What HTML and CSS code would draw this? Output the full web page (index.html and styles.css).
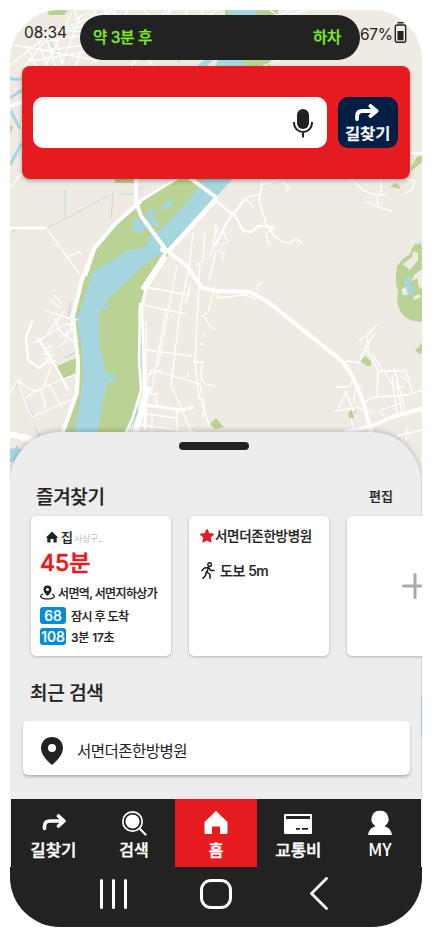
FILE: index.html
```html
<!DOCTYPE html>
<html lang="ko">
<head>
<meta charset="utf-8">
<title>즐겨찾기</title>
<link rel="stylesheet" href="styles.css">
</head>
<body>
<div class="phone">
  <svg class="map" viewBox="10 10 412 917" aria-hidden="true">
    <rect x="10" y="10" width="412" height="917" fill="#efebe3"/>
    <g fill="#bad293">
      <path d="M46 10h22l-4 5H49zM225 10H278L270 66H252L215 66H225z"/>
      <path d="M115 176h20v7h-20zM10 125l3 2-3 7z"/>
      <path d="M182 176L160 190 134 207 112 226 94 246 83 275 76 300 72 318 76 345 80 368 79 392 72 412 64 436H124L134 409 141 385 140 340 138 310 146 286 160 264 195 224 215 196 210 176z"/>
      <path d="M57 366l19-8 1 15-15 7zM411 167l6-10 5-1v6l-11 9zM390 187l5-4 4 2 1 4z"/>
      <path d="M422 247l-2-5-2 3-2-2-4 5-2 6-7 5-6 7-1 8v10l2 8-1 10 3 9 5 6 8 4 9 1zM415 350l4-3 3-5v11l-3 1zM360 361l5-5 6 5v5h-4zM348 414l3-4 5 1-2 7-4 1zM210 424l6-6 4 5 4 4-9 2z"/>
    </g>
    <g fill="#a6d7e0">
      <path d="M230 10H257L246 42 244 66H216L223 38zM197 66l9-7h8l-8 8z"/>
      <path d="M207 176L188 201 162 228 131 249 92 272 84 300 77 318 82 350 83 378 79 410 73 437H96L103 403 107 383 105 368 99 343 99 315 109 298 133 276 161 254 196 218 218 195 235 176z"/>
      <path d="M132 221l6-3 5 6 6-15 6 3-2 6 9-8-1-5 10-5 3 2-4 5-11 4-7 10 5-1 2 6-10-1-8 8-8-1z"/>
      <circle cx="111" cy="378" r="4.500"/><path d="M104 375h7v6h-7zM130 420l8-21v15l-7 13zM104 308l3-4 3 3-3 4zM10 449l5-1 2-3 2 4h5l-8 13h-6z"/>
      <path d="M405 276h5v7l5 7-2 4-5 1-1-8-3-4zM420 696h3v42h-3z"/>
    </g>
    <path fill="#bad293" d="M91 270l3-9 15-19 6 0 19-5-6 11-18 12zM128 250l20-11 1 3-8 7z"/>
    <path fill="#bad293" d="M116 301l15-21 5-8 22-17-14 28-6 27-32 4 2-6z"/>
    <g fill="#efebe3"><path d="M403 264l9-7 1-6 5 2v7l-8 10zM422 269l-8 6-3 7 6-4 2 9 3 2zM401 290l5-4 2 9-5 0zM413 297l6-3 2 3-7 3z"/></g>
    <g fill="none" stroke="#a6d7e0" stroke-width="1">
      <path stroke-width="3" d="M10 78q4 2 12 1M10 98l12-8M11 111l9 18M10 165l12-22"/>
      <path stroke-width=".700" d="M10 233l9-5h28l41-21 21-12M65 217v-27M113 192l-2 27M119 194h14l12-9"/>
      <path d="M16 383l17 33M35 428l6 10M65 358l10-5M127 349v6M141 315v65M71 302l-3 15M70 409l-6 23M47 37l8 13 12 8M140 18l4 12 12 8M178 63l5-9"/>
    </g>
    <g fill="none" stroke="#fff" stroke-width="1.300">
      <path d="M15 45l80 15M10 65l45-35 80 5M24 67l28-35 60-22M45 67l27-54M61 66l20-52M76 66l18-56M28 48l8 18M38 40l9 27M46 36l9 30M54 33l8 32M30 61l55-9M40 51l60-8M48 41l55-9M57 30l53-8M74 10l8 18M94 10l9 16M104 10l11 17M116 10l-9 16M128 10l-8 17M143 10l12 9 15-9M171 10l-18 28M188 10l-12 24M201 10l4 8 12-8M74 20l14-7 8 7 16-8 14 7M92 63l14-7M131 66l8-9M153 66l-5-8M263 66l17-6M270 10l8 6 12-6M285 16l22-6M10 188l14-18"/>
      <path d="M47 229l33 46M67 257l12-5 3 3M50 300l10 8M54 295l8 9M44 310l22 7 12 3M65 310l-18 24M72 318l-1 14-11 5M55 318l5 13 15 12M68 330l-3 12-5 4M34 343l32-19 5 1M10 393l7-12 17 10 9-3 8-21M18 385l14 32 43-19M26 397l18-10 34-14M41 390l5 19M49 384l13 23M43 350l8-4M43 355l9-5M45 360l9-6M48 365l8-5M20 384l-1-6"/>
      <path d="M145 287l45 8M144 305l42 9M147 350l45 6M148 375l13-5M142 388l10-18 48 14 2 10M155 394l3 14M145 394h14M146 414l31 4M152 415v17M177 408v24M141 425l60 8M177 265l-19 101M193 233l-4 35-9 42-9 75 21 48M200 264l-5 97 3 31 12 35M215 286l-7 26-6 5M205 317l5 10 6 2M203 332l3 5M200 344l5 0M193 362h10l-3 14 5 8 10 2M190 285l-4 18M205 230l-2 30-7 6M216 224l-3 25-4 9M187 377l2-4M199 398l5 1-1 19M166 309l-15 85M146 322v100"/>
      <path d="M216 252l-7 27M219 227l-5 11M223 232l5 10-8 3M217 250l7 3-2 7M245 198l9 10M246 198l14-4 3-18M282 182l7 5-4 6M263 185l25-9M269 246l-3-13 9-5M350 178l14 13 13 4h9M381 180v15M366 202l15 6 11 3M377 196l1 11M405 193l7-3 3-9-10-2M257 290l1-5 4-3M217 298l28-3 10 4M218 298v-6M244 291l1 6"/>
      <path stroke-width="1.600" d="M262 182l-3 18 7 24 8 12 8 6 8 1 6-4 6 4"/>
      <path d="M344 362l4-1 11 2 8-18 8-12M359 341l10-7 8-10M369 350l-3-18M372 353l8 13 8 12 5 8M366 350l6 8 6 13M378 371h28l5 17 1 5M378 372l-1 23M392 376l5 40M396 382l7 35M384 371h14M394 368l11 42M365 402l8-5 34-2 15-5M336 387h13l5-9M354 403l1-12 7-5M338 409l8-17 10 27M335 411l20-3M356 407l18 6M351 418l3 15M381 410l20-7M381 412l6 9M397 436l25-6M407 428l-1 12M397 387h7M401 376l7 6"/>
    </g>
    <g fill="none" stroke="#fff" stroke-width="2.400" stroke-linejoin="round">
      <path d="M10 228h37M178 178l-38 23M140 201l-28 26-18 21-9 27M96 246l-10 30M140 303l-1 58 2 30-9 29-8 16M142 310l3 90-7 29M216 197l-49 54-21 35-4 23M246 198l-19 24-12 24M216 201l20 16 7 14 9 1 6-6 17 1M33 320l-7 17 2 23 11 8 12-9-13-21M38 338l22 36 8 16M410 153h12"/>
    </g>
    <g fill="none" stroke="#fff" stroke-width="4" stroke-linejoin="round">
      <path d="M10 106l12-4M136 178v24l5 14 25 34M190 178l27 20M141 201l-26 23-21 25-12 31-9 36 5 45-1 32-16 43M217 199l-50 54M166 250l21 16 15 22 14 3 34 1 18 10 75 60M342 361l10 14 11 26 9 34M345 432l27-6 20-9 32-9"/>
      <path stroke-width="6" d="M10 434l31 8M148 387l-13 48M165 256l-22 34M167 252l-6-4"/>
      <path stroke-width="3" d="M145 380v50M146 405l36 5 12-3"/>
    </g>
  </svg>

  <header class="status">
    <span class="clock">08:34</span>
    <div class="island"><span>약 3분 후</span><span>하차</span></div>
    <span class="percent">67%</span>
    <svg class="battery" viewBox="0 0 12 22"><path d="M3 .7h6" stroke="#222" stroke-width="1.400"/><rect x=".8" y="3" width="10.400" height="17.300" rx="1.800" fill="none" stroke="#222" stroke-width="1.400"/><path d="M3 9h6v9.300H3z" fill="#222"/></svg>
  </header>

  <section class="search">
    <div class="field">
      <svg width="22" height="30" viewBox="0 0 22 30"><rect x="5" y="1" width="12" height="20" rx="6" fill="#222"/><path d="M2 14v1a9 9 0 0 0 18 0v-1M11 24v5.500" fill="none" stroke="#222" stroke-width="2"/></svg>
    </div>
    <div class="route">
      <svg width="24" height="18" viewBox="0 0 24 18"><path d="M2 15v-2.500q0-5.500 5.500-5.500h14M15.500 2l6 5-6 5" fill="none" stroke="#fff" stroke-width="3.800" stroke-linecap="round" stroke-linejoin="round"/></svg>
      <span>길찾기</span>
    </div>
  </section>

  <main class="sheet">
    <div class="handle"></div>
    <div class="heading"><h2>즐겨찾기</h2><span class="edit">편집</span></div>
    <div class="cards">
      <article class="card home">
        <div class="place">
          <svg width="12" height="12" viewBox="0 0 12 12"><path d="M6 .5L11.500 6v1H10.700v4.500H7.500V8h-3v3.500H1.300V7H.5V6z" fill="#222"/></svg>
          <b>집</b><small>사상구...</small>
        </div>
        <strong class="eta">45분</strong>
        <div class="stop">
          <svg width="15" height="15" viewBox="0 0 15 15"><path d="M3 9Q-2 12 3 13.300q4.500 1.300 9 0Q17 12 12 9" fill="none" stroke="#222" stroke-width="1.200"/><path fill="#222" fill-rule="evenodd" d="M7.500.5a4 4 0 0 1 4 4c0 3-4 6.500-4 6.500s-4-3.500-4-6.500a4 4 0 0 1 4-4zM7.500 3a1.500 1.500 0 1 0 0 3 1.500 1.500 0 0 0 0-3z"/></svg>
          <span>서면역, 서면지하상가</span>
        </div>
        <div class="bus"><i>68</i><span>잠시 후 도착</span></div>
        <div class="bus"><i>108</i><span>3분 17초</span></div>
      </article>
      <article class="card hospital">
        <div class="name">
          <svg width="14" height="14" viewBox="0 0 14 14"><path d="M7 1l1.700 4 4.300.4-3.200 2.900.9 4.300L7 10.400l-3.700 2.200.9-4.300L1 5.400 5.300 5z" fill="#e61b1f" stroke="#e61b1f" stroke-width="1.800" stroke-linejoin="round"/></svg>
          <span>서면더존한방병원</span>
        </div>
        <div class="walk">
          <svg width="14" height="17" viewBox="0 0 14 17"><circle cx="8.600" cy="2.500" r="1.800" fill="none" stroke="#222" stroke-width="1.500"/><path d="M1 8.500L3.500 6l4-.5 2.500 3h3M7.500 5.500L6 10l3 2.500v3.700M5.500 9.500l-1 4-2.500 2.800" fill="none" stroke="#222" stroke-width="1.600" stroke-linejoin="round" stroke-linecap="round"/></svg>
          <span>도보 5m</span>
        </div>
      </article>
      <article class="card add">
        <svg width="26" height="26" viewBox="0 0 26 26"><path d="M13 1.500v23M1.500 13h23" stroke="#aaa" stroke-width="3" stroke-linecap="round"/></svg>
      </article>
    </div>
    <h2 class="recent-title">최근 검색</h2>
    <div class="recent">
      <svg width="22" height="28" viewBox="0 0 22 28"><path fill="#222" fill-rule="evenodd" d="M11 0c6 0 11 4.600 11 11 0 8-8 14-11 17C8 25 0 19 0 11 0 4.600 5 0 11 0zm0 7a4 4 0 1 0 0 8 4 4 0 0 0 0-8z"/></svg>
      <span>서면더존한방병원</span>
    </div>
  </main>

  <nav class="tabs">
    <div class="tab"><svg width="24" height="26" viewBox="0 0 24 26"><path d="M2.500 18.500v-2q0-5.500 5.500-5.500h14M16.500 6l5.500 5-5.500 5" fill="none" stroke="#fff" stroke-width="3.600" stroke-linecap="round" stroke-linejoin="round"/></svg><span class="wide">길찾기</span></div>
    <div class="tab"><svg width="26" height="26" viewBox="0 0 26 26"><circle cx="11.500" cy="11.500" r="9.700" fill="none" stroke="#fff" stroke-width="1.700"/><circle cx="11.500" cy="11.500" r="7" fill="#fff"/><path d="M18.500 18.500l6 6" stroke="#fff" stroke-width="2.200" stroke-linecap="round"/></svg><span>검색</span></div>
    <div class="tab active"><svg width="26" height="26" viewBox="0 0 26 26"><path d="M13 1l11.500 11v11q0 1-1 1H17v-7.500H9V24H2.500q-1 0-1-1V12z" fill="#fff"/></svg><span>홈</span></div>
    <div class="tab"><svg width="28" height="26" viewBox="0 0 28 26"><path fill="#fff" fill-rule="evenodd" d="M1 4h26q1 0 1 1v18q0 1-1 1H1q-1 0-1-1V5q0-1 1-1zm1 2v3h24V6zm10 12v1.700h4V18zm6 0v1.700h6V18z"/></svg><span class="wide">교통비</span></div>
    <div class="tab"><svg width="26" height="26" viewBox="0 0 26 26"><path fill="#fff" d="M13 .8a8.300 8.300 0 0 1 4.500 15.400Q24 18 25 25H1q1-7 7.500-8.800A8.300 8.300 0 0 1 13 .8z"/></svg><span class="my">MY</span></div>
  </nav>

  <footer class="system">
    <svg width="28" height="30" viewBox="0 0 28 30"><path d="M1.500 1.500v27M13.500 1.500v27M25.500 1.500v27" stroke="#fff" stroke-width="3" stroke-linecap="round"/></svg>
    <span class="circle"></span>
    <svg width="18" height="33" viewBox="0 0 18 33"><path d="M16.500 1.500l-15 15 15 15" fill="none" stroke="#fff" stroke-width="2.800" stroke-linecap="round" stroke-linejoin="round"/></svg>
  </footer>
</div>
</body>
</html>
```
FILE: styles.css
```css
* { box-sizing: border-box; }
body { margin: 0; padding: 10px; width: 432px; height: 937px; overflow: hidden; background: #fff; font-family: Inter, "Noto Sans CJK KR", sans-serif; color: #222; }
svg { display: block; flex: none; }
span, b, small, strong, i { white-space: nowrap; }
.phone { position: relative; width: 412px; height: 917px; border-radius: 50px; overflow: hidden; display: flex; flex-direction: column; isolation: isolate; }
.map { position: absolute; inset: 0; width: 412px; height: 917px; z-index: -1; }

.status { display: flex; height: 56px; padding: 5px 0 0 14px; }
.clock { width: 56px; font-size: 15.5px; line-height: 20px; margin-top: 8px; letter-spacing: -.1px; }
.island { width: 280px; height: 45px; border-radius: 23px; background: #222; color: #80ed24; display: flex; justify-content: space-between; padding: 0 19px 0 13px; font-size: 15.5px; line-height: 45px; font-weight: 500; letter-spacing: -.3px; -webkit-text-stroke: .25px; }
.percent { font-size: 15.5px; line-height: 20px; margin-top: 10px; width: 34px; letter-spacing: -.3px; }
.battery { width: 13px; height: 22px; margin-top: 7px; }

.search { height: 113px; margin: 0 12px; border-radius: 8px; background: #e61b1f; padding: 31px 12px 0 11px; display: flex; justify-content: space-between; align-items: flex-start; box-shadow: 0 2px 4px rgba(0,0,0,.3); flex: none; }
.field { width: 294px; height: 51px; border-radius: 10px; background: #fff; display: flex; justify-content: flex-end; padding: 11px 13px 0 0; }
.route { width: 60px; height: 51px; border-radius: 10px; background: #001f45; color: #fff; display: flex; flex-direction: column; align-items: center; padding-top: 7px; font-size: 15px; font-weight: 500; line-height: 24px; -webkit-text-stroke: .35px; }
.route svg { margin-left: -2px; }
.route span { transform: scaleX(1.1); }

.sheet { margin: 253px 1px 0 0; padding-left: 1px; height: 367px; background: #ededed; border-radius: 50px 50px 0 0; box-shadow: 0 -2px 5px rgba(0,0,0,.18); flex: none; display: flex; flex-direction: column; }
.handle { width: 70px; height: 8px; border-radius: 4px; background: #222; margin: 10px auto 0; transform: translateX(-2px); flex: none; }
.heading { height: 66px; display: flex; justify-content: space-between; padding: 33px 28px 0 25px; line-height: 30px; }
h2 { margin: 0; font-size: 19px; font-weight: 500; letter-spacing: -.3px; -webkit-text-stroke: .2px; }
.edit { font-size: 13px; font-weight: 500; line-height: 27px; -webkit-text-stroke: .2px; }
.cards { display: grid; grid-template-columns: 140px 140px 140px; gap: 18px; margin: 0 -1px 0 20px; height: 140px; flex: none; overflow: visible; }
.card { background: #fff; border-radius: 5px; box-shadow: 0 1px 3px rgba(0,0,0,.25); height: 140px; overflow: hidden; }
.home { padding: 11px 0 0 9px; }
.place { display: flex; align-items: center; height: 20px; padding-left: 6px; line-height: 20px; }
.place b { font-size: 13px; font-weight: 500; margin-left: 3px; -webkit-text-stroke: .2px; }
.place small { font-size: 9.500px; color: #aaa; font-weight: 300; margin: 3px 0 0 1px; letter-spacing: -.95px; }
.eta { display: block; color: #e61b1f; font-size: 23px; line-height: 32px; font-weight: 500; height: 32px; -webkit-text-stroke: .6px; }
.stop { display: flex; align-items: center; height: 26px; gap: 3px; font-size: 12px; font-weight: 500; letter-spacing: -.63px; -webkit-text-stroke: .2px; }
.bus { display: flex; align-items: center; height: 21px; gap: 5px; font-size: 12px; font-weight: 500; letter-spacing: -.6px; -webkit-text-stroke: .2px; }
.bus span { margin-top: -1px; }
.bus:last-child span { letter-spacing: -.2px; }
.bus i { width: 26px; height: 17px; line-height: 17px; border-radius: 3px; background: #058dd2; color: #fff; font-style: normal; font-size: 14px; letter-spacing: -.1px; display: flex; justify-content: center; }
.hospital { padding: 10px 0 0 11px; }
.name { display: flex; align-items: center; height: 20px; gap: 1px; font-size: 13.500px; font-weight: 500; letter-spacing: -.3px; -webkit-text-stroke: .2px; }
.name span { margin-top: -2px; }
.walk { display: flex; align-items: center; gap: 5px; height: 20px; margin-top: 14px; padding-left: 1px; font-size: 14px; font-weight: 500; letter-spacing: -.45px; -webkit-text-stroke: .2px; }
.add { padding: 57px 0 0 55px; }
.recent-title { margin: 23px 0 0 19px; line-height: 30px; height: 42px; }
.recent { width: 387px; height: 54px; margin-left: 12px; border-radius: 5px; background: #fff; box-shadow: 0 2px 3px rgba(0,0,0,.25); display: flex; align-items: center; padding: 5px 0 0 18px; gap: 14px; font-size: 15.500px; letter-spacing: -.5px; line-height: 20px; }
.recent span { font-family: "Noto Sans CJK KR", sans-serif; font-weight: 400; margin-top: -2px; }

.tabs { height: 68px; margin: 0 1px; background: #222; display: grid; grid-template-columns: repeat(5, 1fr); color: #fff; flex: none; }
.tab { display: flex; flex-direction: column; align-items: center; padding-top: 11px; font-size: 16px; font-weight: 500; line-height: 24px; -webkit-text-stroke: .35px; }
.tab svg { height: 26px; }
.tab span { margin-top: 2px; }
.tab:first-child { padding-left: 3px; }
.tab .wide { font-size: 15.500px; margin-top: 3px; transform: scaleX(1.08); }
.tab .my { font-family: "Noto Sans CJK KR", sans-serif; margin-top: 1px; font-size: 17px; -webkit-text-stroke: 0; }
.active { background: #e61b1f; }
.system { height: 60px; background: #222; display: flex; align-items: flex-start; flex: none; padding: 12px 0 0 90px; }
.circle { width: 32px; height: 30px; border: 3px solid #fff; border-radius: 11px; margin: 0 78px 0 72px; }
.system svg:last-child { margin-top: -2px; }
```
